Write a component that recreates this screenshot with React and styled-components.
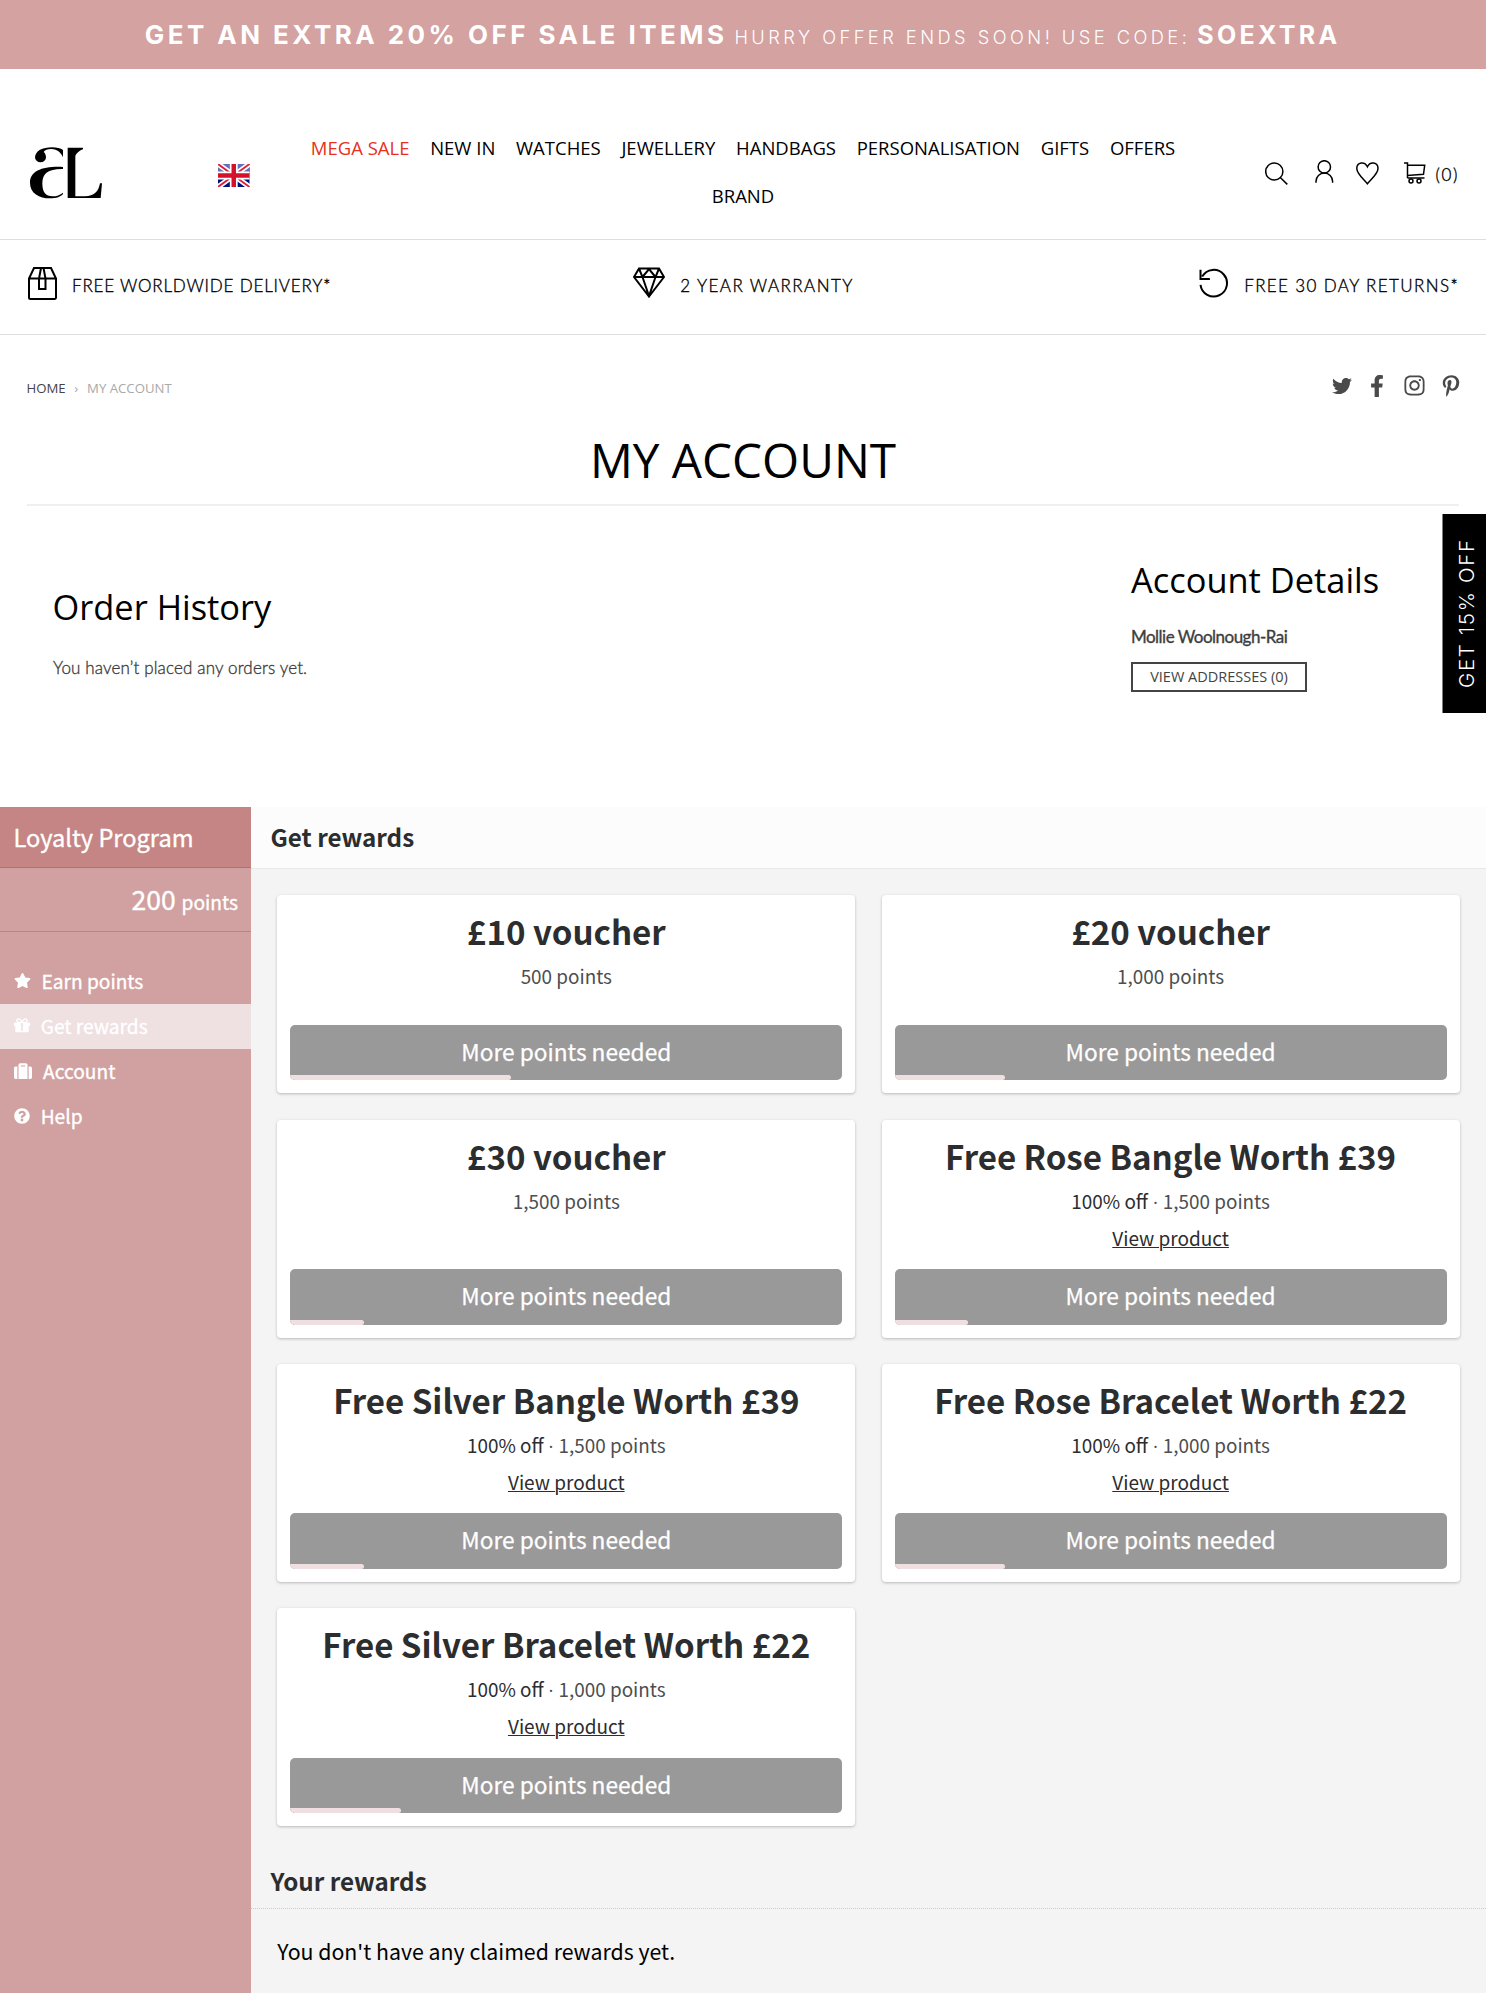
import React from "react";
import styled, { createGlobalStyle } from "styled-components";
import { FaTwitter, FaFacebookF, FaInstagram, FaPinterestP, FaStar, FaSuitcase, FaQuestionCircle } from "react-icons/fa";

const open = `"Open Sans", "Noto Sans", sans-serif`;
const body = `Lato, "Open Sans", sans-serif`;
const promo = `Inter, "Open Sans", sans-serif`;
const source = `"Noto Sans CJK SC", "Open Sans", sans-serif`;

const Global = createGlobalStyle`
  *, *::before, *::after { box-sizing: border-box; }
  body { margin: 0; background: #fff; color: #000; font-family: ${open}; }
  h1, h2, h3, p { margin: 0; font-weight: 400; }
  svg { display: block; flex: none; }
`;

const Page = styled.div`
  position: relative;
  width: 1486px;
  height: 2000px;
  overflow: hidden;
`;

const Banner = styled.div`
  height: 68.5px;
  background: #d3a2a1;
  color: #fff;
  display: flex;
  align-items: baseline;
  gap: 7px;
  padding-left: 144.7px;
  font-family: ${promo};
  line-height: 70px;
  white-space: nowrap;
`;
const BannerText = styled.span`
  font-size: ${(p) => p.$size}px;
  font-weight: ${(p) => p.$weight};
  letter-spacing: ${(p) => p.$track}px;
`;

const Header = styled.header`
  height: 171.5px;
  border-bottom: 1px solid #dedede;
  display: grid;
  grid-template-columns: 1fr 900px 1fr;
  padding: 0 27px;
`;
const Brand = styled.div`
  display: flex;
  padding: 78.5px 0 0 3px;
`;
const Flag = styled.svg`
  margin: 17px 0 0 116px;
`;
const Nav = styled.nav`
  display: flex;
  flex-wrap: wrap;
  justify-content: center;
  align-content: flex-start;
  column-gap: 20.7px;
  padding-top: 55px;
`;
const NavLink = styled.a`
  font-size: 18.5px;
  line-height: 48.7px;
  color: ${(p) => (p.$sale ? "#e8301c" : "#000")};
`;
const Tools = styled.div`
  display: flex;
  align-items: flex-start;
  justify-content: flex-end;
  padding-top: 91.5px;
`;
const Tool = styled.svg`
  margin: ${(p) => p.$top}px ${(p) => p.$gap}px 0 0;
  fill: none;
  stroke: #000;
  stroke-width: 1.5;
`;
const CartCount = styled.span`
  font: 300 17px/24px ${body};
  letter-spacing: 1.6px;
  padding-top: 3px;
  -webkit-text-stroke: 0.35px #000;
`;

const Perks = styled.section`
  height: 95px;
  border-bottom: 1px solid #dedede;
  padding: 25px 27px 0 28px;
  display: grid;
  grid-template-columns: 1fr auto 1fr;
`;
const Perk = styled.div`
  display: flex;
  justify-self: ${(p) => p.$side || "center"};
  gap: 15px;
  font: 300 17px/42px ${body};
  letter-spacing: ${(p) => p.$track}px;
  -webkit-text-stroke: 0.35px #000;
  svg { fill: none; stroke: #000; stroke-width: 2; margin-top: 2px; }
`;

const TopRow = styled.div`
  display: flex;
  justify-content: space-between;
  padding: 39px 24px 0 26.5px;
  height: 85px;
`;
const Crumbs = styled.div`
  display: flex;
  gap: 8.7px;
  margin-top: -1px;
  font-size: 13.2px;
  line-height: 30px;
  color: #a9a9a9;
  b { font-weight: 400; color: #444; }
`;
const Social = styled.div`
  display: flex;
  align-items: center;
  gap: 14.5px;
  height: 23px;
  color: #4a4a4a;
`;
const Title = styled.h1`
  margin: 0 27px;
  height: 86px;
  border-bottom: 2px solid #efefef;
  text-align: center;
  font-size: 47.7px;
  line-height: 80px;
`;

const Account = styled.section`
  height: 301px;
  display: flex;
  justify-content: space-between;
`;
const Orders = styled.div`
  padding: 76px 0 0 52.5px;
`;
const Details = styled.div`
  width: 355px;
  padding-top: 49px;
`;
const Heading = styled.h2`
  font-size: 34.4px;
  line-height: 50px;
`;
const Copy = styled.p`
  font: ${(p) => (p.$strong ? 400 : 300)} 17px/30px ${body};
  color: #3d3d3d;
  margin: ${(p) => p.$top}px 0 0 ${(p) => (p.$strong ? 0 : 0.5)}px;
  -webkit-text-stroke: 0.35px #3d3d3d;
  letter-spacing: ${(p) => p.$track}px;
`;
const Outline = styled.button`
  display: block;
  margin-top: 10px;
  width: 176px;
  height: 30px;
  padding: 0;
  border: 2px solid #444;
  background: #fff;
  color: #444;
  font: 14.5px/26px ${open};
`;
const OfferTab = styled.div`
  position: absolute;
  right: 0;
  top: 514px;
  width: 43.5px;
  height: 199px;
  padding-right: 4px;
  background: #000;
  color: #fff;
  writing-mode: vertical-rl;
  transform: rotate(180deg);
  text-align: center;
  font: 300 20.5px/39.5px ${promo};
  letter-spacing: 1.7px;
`;

const Loyalty = styled.section`
  height: 1186px;
  display: grid;
  grid-template-columns: 251px 1fr;
  background: #f4f4f4;
  font-family: ${source};
`;
const Sidebar = styled.aside`
  background: #d1a1a1;
  color: #fff;
  -webkit-text-stroke: 0.35px #fff;
`;
const Program = styled.h2`
  height: 61px;
  padding-left: 13.5px;
  background: #c48584;
  border-bottom: 1px solid #b96c6b;
  font-size: 23.6px;
  line-height: 60px;
`;
const Balance = styled.div`
  height: 64px;
  padding-right: 13px;
  border-bottom: 1px solid #c48080;
  text-align: right;
  font-size: 19.2px;
  line-height: 61px;
  strong { font-size: 26.5px; font-weight: 400; margin-right: 1.5px; }
`;
const Menu = styled.div`
  padding-top: 27px;
`;
const MenuItem = styled.div`
  display: flex;
  align-items: center;
  gap: ${(p) => p.$gap}px;
  height: 45px;
  padding: 0 0 1.5px 14px;
  font-size: 19.15px;
  background: ${(p) => (p.$active ? "#efe0e1" : "transparent")};
`;
const PanelTitle = styled.h2`
  height: ${(p) => p.$h}px;
  padding-left: 19.5px;
  background: ${(p) => p.$bg};
  border-bottom: 1px ${(p) => p.$line};
  color: #2b2d2e;
  font-size: 24.2px;
  font-weight: 700;
  line-height: ${(p) => p.$lh}px;
`;
const Grid = styled.div`
  display: grid;
  grid-template-columns: 578px 578px;
  grid-template-rows: 198.3px 218px 218px 218px;
  gap: 26.3px;
  padding: 26px 0 0 26.3px;
  height: 986px;
`;
const Card = styled.article`
  display: flex;
  flex-direction: column;
  padding: 13px;
  background: #fff;
  border-radius: 4px;
  box-shadow: 0 1px 3px rgba(0, 0, 0, 0.25);
  text-align: center;
`;
const Reward = styled.h3`
  font-size: 33.1px;
  font-weight: 700;
  line-height: 46px;
  color: #2b2d2e;
`;
const Cost = styled.p`
  margin-top: 4px;
  font-size: 18.9px;
  line-height: 35px;
  color: #4c4e4f;
  b { font-weight: 400; color: #2b2d2e; }
`;
const Dot = styled.span`
  font-family: ${open};
`;
const Product = styled.a`
  font-size: 19px;
  line-height: 36px;
  color: #2b2d2e;
  text-decoration: underline;
  text-decoration-thickness: 1px;
`;
const Needed = styled.div`
  position: relative;
  margin-top: auto;
  height: 55.5px;
  border-radius: 5px;
  background: #999;
  color: #fff;
  font-size: 22.7px;
  line-height: 54px;
  -webkit-text-stroke: 0.25px #fff;
  overflow: hidden;
`;
const Progress = styled.span`
  position: absolute;
  left: 0;
  bottom: 0;
  width: ${(p) => p.$value}%;
  height: 5px;
  background: #efdfe1;
  border-radius: 0 3px 3px 0;
`;
const Empty = styled.p`
  padding: 22px 0 0 26.3px;
  font-size: 21.3px;
  line-height: 40px;
`;

const rewards = [
  ["£10 voucher", "500", 40],
  ["£20 voucher", "1,000", 20],
  ["£30 voucher", "1,500", 13.33],
  ["Free Rose Bangle Worth £39", "1,500", 13.33, true],
  ["Free Silver Bangle Worth £39", "1,500", 13.33, true],
  ["Free Rose Bracelet Worth £22", "1,000", 20, true],
  ["Free Silver Bracelet Worth £22", "1,000", 20, true],
];
const links = ["MEGA SALE", "NEW IN", "WATCHES", "JEWELLERY", "HANDBAGS", "PERSONALISATION", "GIFTS", "OFFERS", "BRAND"];

function Logo() {
  return (
    <svg width="72" height="51.5" viewBox="60 51 216 154.5">
      <path d="M75 84C75 62 98 52 126 52c14 0 26 3 33 8v22c-7-17-20-25-35-25-12 0-20 3-23 9 5 4 7 10 7 17a17 17 0 0 1-33 1Z" />
      <path d="M159 111C100 108 60 122 60 158c0 32 28 47 60 47 20 0 32-5 39-13v-4c-9 7-19 11-31 11-22 0-31-13-31-39 0-30 18-44 62-43Z" />
      <path d="M173 53h46v5c-11 4-23 14-23 22v119h29c27 0 41-15 45-39h6l-4 44h-99Z" />
    </svg>
  );
}
function UnionJack() {
  return (
    <Flag width="31.5" height="23" viewBox="0 0 60 44" preserveAspectRatio="none">
      <path fill="#00107a" d="M0 0h60v44H0z" />
      <path fill="#6670b8" d="M0 0h60v18H0z" />
      <path stroke="#fff" strokeWidth="10" d="M0 0l60 44M60 0L0 44" />
      <path stroke="#d9203a" strokeWidth="3.5" d="M0 0l60 44M60 0L0 44" />
      <path stroke="#fff" strokeWidth="15" d="M30 0v44M0 22h60" />
      <path stroke="#d5102c" strokeWidth="8.5" d="M30 0v44M0 22h60" />
    </Flag>
  );
}
function Gift() {
  return (
    <svg width="16" height="15" viewBox="0 0 16 15" fill="#fff" stroke="none">
      <path d="M.5 4.500h5.500v3.600H0V5a.5.5 0 0 1 .5-.5ZM10 4.500h5.500a.5.5 0 0 1 .5.500v3.100H10ZM6 4.500h4V5H6ZM1.300 8h4.900V5h1v8h1.600V5h1v3h4.900v5.200a1 1 0 0 1-1 1H2.300a1 1 0 0 1-1-1Z" />
      <path fill="none" stroke="#fff" strokeWidth="1.300" d="M8 4.500C7 1.800 5.800.8 4.600.8a1.800 1.800 0 0 0 0 3.600H8ZM8 4.500C9 1.800 10.200.8 11.400.8a1.800 1.800 0 0 1 0 3.600H8Z" />
    </svg>
  );
}

export default function App() {
  return (
    <Page>
      <Global />
      <Banner>
        <BannerText $size={26} $weight={700} $track={3.45}>GET AN EXTRA 20% OFF SALE ITEMS</BannerText>
        <BannerText $size={18.3} $weight={300} $track={3.45}>HURRY OFFER ENDS SOON! USE CODE:</BannerText>
        <BannerText $size={25} $weight={700} $track={3.3}>SOEXTRA</BannerText>
      </Banner>
      <Header>
        <Brand><Logo /><UnionJack /></Brand>
        <Nav>{links.map((l, i) => <NavLink key={l} $sale={i === 0}>{l}</NavLink>)}</Nav>
        <Tools>
          <Tool $top={2} $gap={26.5} width="23" height="23" viewBox="0 0 23 23"><circle cx="9.300" cy="9.500" r="8.600" /><path d="M15.500 15.800l6.800 6.600" /></Tool>
          <Tool $top={0} $gap={22} width="19" height="23" viewBox="0 0 19 23"><circle cx="9.300" cy="6.900" r="6.200" /><path d="M1 22.800v-1.500a8.300 8.300 0 0 1 16.600 0v1.500" /></Tool>
          <Tool $top={1.5} $gap={25} width="23" height="23" viewBox="0 0 23 23"><path d="M11.400 21.800C7.500 17 .8 11.500.8 6.400.8 0 8.700-1 11.400 4.800 14.100-1 22-.0 22 6.400 22 11.500 15.300 17 11.400 21.800Z" /></Tool>
          <Tool $top={2} $gap={10} width="22" height="22" viewBox="0 0 22 22"><path d="M0 1h3.500v12.500l16-1.200 1.200-9H3.500M3.500 16h17M3.500 13v3" /><circle cx="7" cy="19" r="2" /><circle cx="15" cy="19" r="2" /></Tool>
          <CartCount>(0)</CartCount>
        </Tools>
      </Header>
      <Perks>
        <Perk $side="start" $track={0.82}><svg width="29" height="33" viewBox="0 0 29 33"><path d="M1 11.500V30.500a1.500 1.500 0 0 0 1.500 1.500h24a1.500 1.500 0 0 0 1.500-1.500V11.500L23 1H6ZM1 11.500h27M13 1l-2 10.500V22h6.500V11.500L15.500 1" /></svg>FREE WORLDWIDE DELIVERY*</Perk>
        <Perk $track={1.45}><svg width="32" height="31" viewBox="0 0 32 31"><path d="M6 1.500h20L31 10 16 29.500 1 10ZM1 10h30M6 1.500L9.500 10 16 29 22.500 10 26 1.500M9.500 10L16 2l6.500 8" /></svg>2 YEAR WARRANTY</Perk>
        <Perk $side="end" $track={1.38}><svg width="30" height="31" viewBox="0 -1 30 31"><path d="M1.500 16.800a13.300 13.300 0 1 0 1.700-8.300M1.500 1.700V11h9.400" /></svg>FREE 30 DAY RETURNS*</Perk>
      </Perks>
      <TopRow>
        <Crumbs><b>HOME</b><span>›</span><span>MY ACCOUNT</span></Crumbs>
        <Social>
          <FaTwitter size={20} /><FaFacebookF size={22} /><FaInstagram size={23} /><FaPinterestP size={22} />
        </Social>
      </TopRow>
      <Title>MY ACCOUNT</Title>
      <Account>
        <Orders>
          <Heading>Order History</Heading>
          <Copy $top={21} $track={0.15}>You haven’t placed any orders yet.</Copy>
        </Orders>
        <Details>
          <Heading>Account Details</Heading>
          <Copy $top={17} $strong $track={-0.52}>Mollie Woolnough-Rai</Copy>
          <Outline>VIEW ADDRESSES (0)</Outline>
        </Details>
      </Account>
      <OfferTab>GET 15% OFF</OfferTab>
      <Loyalty>
        <Sidebar>
          <Program>Loyalty Program</Program>
          <Balance><strong>200</strong> points</Balance>
          <Menu>
            <MenuItem $gap={10.5}><FaStar size={17} />Earn points</MenuItem>
            <MenuItem $gap={10.7} $active><Gift />Get rewards</MenuItem>
            <MenuItem $gap={11}><FaSuitcase size={18} />Account</MenuItem>
            <MenuItem $gap={10.7}><FaQuestionCircle size={16} />Help</MenuItem>
          </Menu>
        </Sidebar>
        <div>
          <PanelTitle $h={62} $lh={60} $bg="#fcfcfc" $line="solid #e8e8e8">Get rewards</PanelTitle>
          <Grid>
            {rewards.map(([name, pts, v, prod]) => (
              <Card key={name}>
                <Reward>{name}</Reward>
                <Cost>{prod && <><b>100% off</b><Dot> · </Dot></>}{pts} points</Cost>
                {prod && <Product>View product</Product>}
                <Needed>More points needed<Progress $value={v} /></Needed>
              </Card>
            ))}
          </Grid>
          <PanelTitle $h={54} $lh={52} $bg="transparent" $line="dotted #ccc">Your rewards</PanelTitle>
          <Empty>You don't have any claimed rewards yet.</Empty>
        </div>
      </Loyalty>
    </Page>
  );
}
